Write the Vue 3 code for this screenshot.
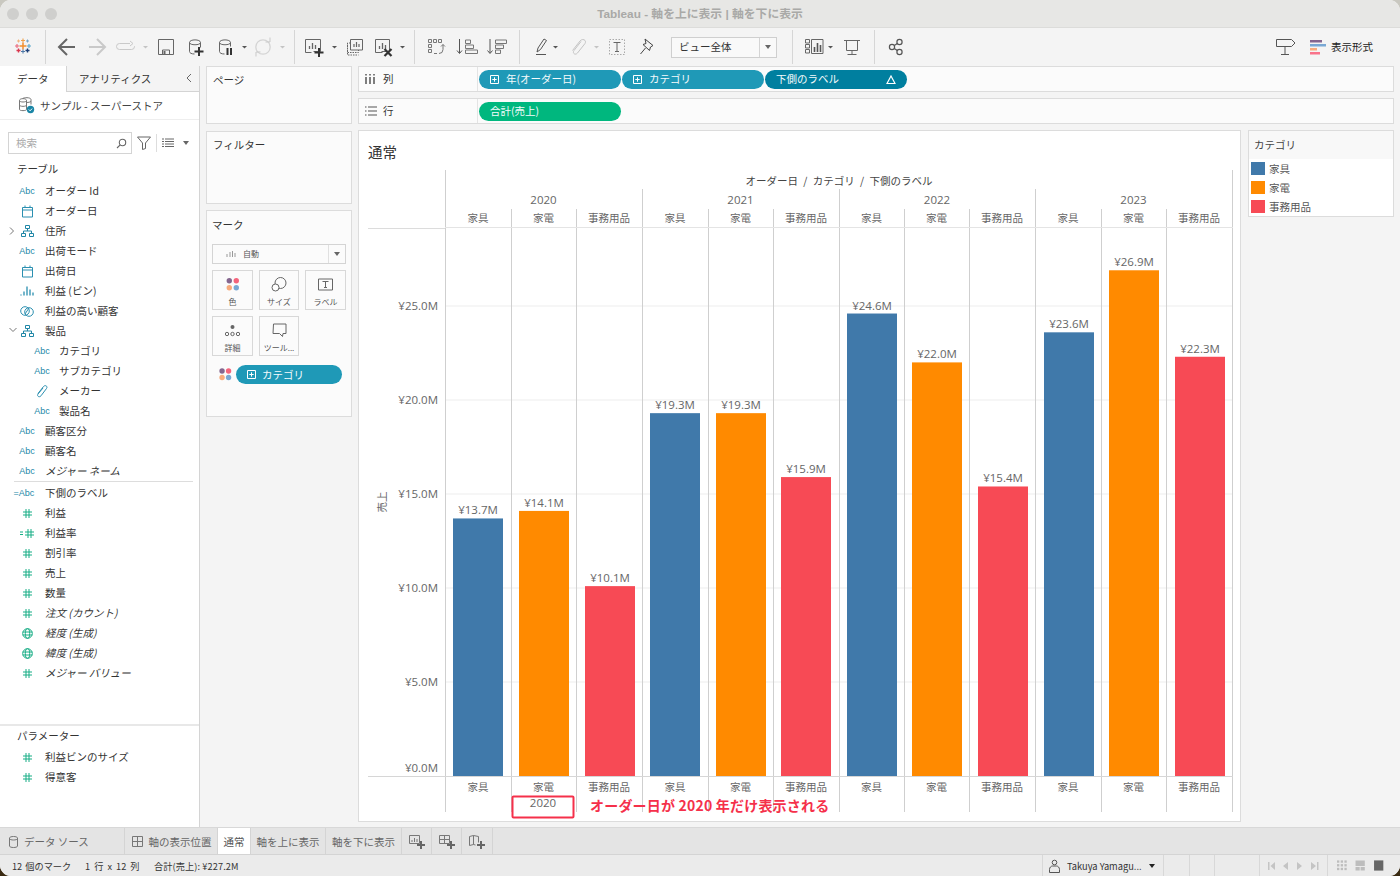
<script setup>
const fields1 = [
  { t: 'abc', n: 'オーダー Id' }, { t: 'cal', n: 'オーダー日' }, { t: 'hier', n: '住所', c: 'r' },
  { t: 'abc', n: '出荷モード' }, { t: 'cal', n: '出荷日' }, { t: 'bin', n: '利益 (ビン)' },
  { t: 'set', n: '利益の高い顧客' }, { t: 'hier', n: '製品', c: 'd' },
  { t: 'abc', n: 'カテゴリ', sub: 1 }, { t: 'abc', n: 'サブカテゴリ', sub: 1 },
  { t: 'clip', n: 'メーカー', sub: 1 }, { t: 'abc', n: '製品名', sub: 1 },
  { t: 'abc', n: '顧客区分' }, { t: 'abc', n: '顧客名' }, { t: 'abc', n: 'メジャー ネーム', i: 1 },
]
const fields2 = [
  { t: 'eqabc', n: '下側のラベル' }, { t: 'num', n: '利益' }, { t: 'eqnum', n: '利益率' },
  { t: 'num', n: '割引率' }, { t: 'num', n: '売上' }, { t: 'num', n: '数量' },
  { t: 'num', n: '注文 (カウント)', i: 1 }, { t: 'globe', n: '経度 (生成)', i: 1 },
  { t: 'globe', n: '緯度 (生成)', i: 1 }, { t: 'num', n: 'メジャー バリュー', i: 1 },
]
const params = [{ t: 'num', n: '利益ビンのサイズ' }, { t: 'num', n: '得意客' }]

const lines = [445, 511, 576, 642, 708, 773, 839, 904, 969, 1035, 1101, 1166, 1232]
const yearLines = [445, 642, 839, 1035, 1232]
const cats = ['家具', '家電', '事務用品']
const colors = ['#4079aa', '#ff8a00', '#f74a55']
const xs = [453, 519, 585, 650, 716, 781, 847, 912, 978, 1044, 1109, 1175]
const vals = [13.7, 14.1, 10.1, 19.3, 19.3, 15.9, 24.6, 22.0, 15.4, 23.6, 26.9, 22.3]
const bars = vals.map((v, i) => {
  const h = v * 18.8
  return {
    x: xs[i], y: 776 - h, h, c: colors[i % 3], cat: cats[i % 3],
    cx: (lines[i] + lines[i + 1]) / 2, label: '¥' + v.toFixed(1) + 'M',
  }
})
const years = [2020, 2021, 2022, 2023].map((y, i) => ({ y, x: (yearLines[i] + yearLines[i + 1]) / 2 }))
const ticks = [25, 20, 15, 10, 5, 0].map(v => ({ y: 776 - v * 18.8, label: '¥' + v.toFixed(1) + 'M' }))
const legend = [{ n: '家具', c: colors[0] }, { n: '家電', c: colors[1] }, { n: '事務用品', c: colors[2] }]
</script>

<template>
  <div class="win">
    <header class="titlebar">
      <span class="light"></span><span class="light"></span><span class="light"></span>
      <div class="wintitle">Tableau - 軸を上に表示 | 軸を下に表示</div>
    </header>

    <div class="toolbar">
      <svg width="45" height="38" viewBox="0 28 45 38" fill="none" stroke-width="1.100">
        <path d="M23 42.500v7M19.500 46h7" stroke="#f28e2b" stroke-width="1.500"/>
        <path d="M23 38.500v4M21 40.500h4" stroke="#eea04a"/>
        <path d="M23 49.500v4M21 51.500h4" stroke="#4e79a7"/>
        <path d="M17 44v4M15 46h4" stroke="#e9657b"/>
        <path d="M29 44v4M27 46h4" stroke="#59a5c9"/>
        <path d="M18.500 39.500v3M17 41h3" stroke="#f0b37e"/>
        <path d="M27.500 39.500v3M26 41h3" stroke="#76a5c8"/>
        <path d="M18.500 48.500v4M16.500 50.500h4" stroke="#d9374e" stroke-width="1.400"/>
        <path d="M27.500 48.500v4M25.500 50.500h4" stroke="#1c3f78" stroke-width="1.400"/>
      </svg>
      <i class="sep"></i>
      <svg width="248" height="38" viewBox="46 28 248 38" fill="none" stroke="#666" stroke-width="1">
        <path d="M75 47H59M67 39l-8 8 8 8" stroke-width="2"/>
        <path d="M89 47h16M97 39l8 8-8 8" stroke="#c9c9c9" stroke-width="2"/>
        <path d="M130 43.500h-10.500a3 3 0 0 0 0 6h12a3 3 0 0 0 3-3v-.500M130 41l3 2.500-3 2.500" stroke="#c9c9c9"/>
        <path d="M143 46h5l-2.500 2.500z" fill="#c4c4c4" stroke="none"/>
        <path d="M158.500 39.500h15v15h-15zM162.500 54.500v-4.500h7v4.500"/>
        <path d="M163.500 51h2v3h-2z" fill="#666" stroke="none"/>
        <path d="M189.500 42.500c0-3.500 11-3.500 11 0v5M189.500 42.500v9c0 1.500 2 2.500 5 2.500M189.500 42.500c0 3 11 3 11 0"/>
        <path d="M199 47v9M194.500 51.500h9" stroke="#333" stroke-width="2"/>
        <path d="M219.500 42.500c0-3.500 11-3.500 11 0v4M219.500 42.500v9c0 1.500 2 2.500 5 2.500M219.500 42.500c0 3 11 3 11 0"/>
        <path d="M227.500 48v7M231 48v7" stroke="#333" stroke-width="2"/>
        <path d="M242 46h5l-2.500 2.500z" fill="#555" stroke="none"/>
        <circle cx="263" cy="47" r="7.200" stroke="#d4d4d4" stroke-width="1.300"/>
        <path d="M270 37.500v4.500h-4.500M256 56.500V52h4.500" stroke="#c9c9c9"/>
        <path d="M280 46h5l-2.500 2.500z" fill="#c4c4c4" stroke="none"/>
      </svg>
      <i class="sep"></i>
      <svg width="119" height="38" viewBox="295 28 119 38" fill="none" stroke="#666" stroke-width="1">
        <path d="M305.500 39.500h15v12h-7M305.500 39.500v13h6"/>
        <path d="M309.500 49v-3M312.500 49v-6M315.500 49v-4" stroke-width="1.300"/>
        <path d="M319 48v9M314.500 52.500h9" stroke="#333" stroke-width="2"/>
        <path d="M332 46h5l-2.500 2.500z" fill="#555" stroke="none"/>
        <path d="M350.500 39.500h12v10.500h-12z"/>
        <path d="M354 47v-3M356.500 47v-5M359 47v-3" stroke-width="1.200"/>
        <path d="M350.500 43h-3v9.500h11v-2.500M347.500 43v12h11" stroke-dasharray="1.500 1"/>
        <path d="M375.500 39.500h14v12h-8M375.500 39.500v13h7"/>
        <path d="M379.500 49v-3M382.500 49v-6M385.500 49v-4" stroke-width="1.300"/>
        <path d="M384.500 49l7 7M391.500 49l-7 7" stroke="#333" stroke-width="2.200"/>
        <path d="M400 46h5l-2.500 2.500z" fill="#555" stroke="none"/>
      </svg>
      <i class="sep"></i>
      <svg width="104" height="38" viewBox="415 28 104 38" fill="none" stroke="#777" stroke-width="1">
        <path d="M428.500 39.500h3v3h-3zM433.500 39.500h3v3h-3zM438.500 39.500h3v3h-3zM428.500 44.500h3v3h-3zM428.500 49.500h3v3h-3zM434 53.500h3"/>
        <path d="M443 44.500v5a4 4 0 0 1-4 4M441 46.500l2-2 2 2"/>
        <path d="M459.500 39v14M457 50.500l2.500 3 2.500-3" stroke="#555" stroke-width="1"/>
        <path d="M465.500 40h5v3.500h-5zM465.500 45h8v3.500h-8zM465.500 50h12v3.500h-12z"/>
        <path d="M490 39v14M487.500 50.500l2.500 3 2.500-3" stroke="#555" stroke-width="1"/>
        <path d="M495.500 40h11v3.500h-11zM495.500 45h8v3.500h-8zM495.500 50h5v3.500h-5z"/>
      </svg>
      <i class="sep"></i>
      <svg width="151" height="38" viewBox="520 28 151 38" fill="none" stroke="#666" stroke-width="1">
        <path d="M537 52l1-4 6-9 2.500 1.500-6 9z M536 54.500h10" stroke="#555"/>
        <path d="M553 46h5l-2.500 2.500z" fill="#555" stroke="none"/>
        <path d="M572.500 50.500L580 41c2.500-3 7-1 5 2.500L577.500 53c-2 2.500-5.500.5-3.500-2.500l7-9" stroke="#c4c4c4" stroke-width="1"/>
        <path d="M594 46h5l-2.500 2.500z" fill="#c4c4c4" stroke="none"/>
        <path d="M609.500 39.500h15v15h-15z" stroke="#aaa" stroke-dasharray="1.500 1.500"/>
        <path d="M613.500 42.500h7M617 42.500v9M615 51.500h4" stroke="#666"/>
        <path d="M645 39l8 6.500-2.500 1.500-1 3.500-6.500-6 3-1zM645.500 48l-5 6" stroke="#444"/>
      </svg>
      <div class="viewsel"><span class="vt">ビュー全体</span><span class="vc"><b class="caret"></b></span></div>
      <i class="gap15"></i>
      <i class="sep"></i>
      <svg width="81" height="38" viewBox="793 28 81 38" fill="none" stroke="#666" stroke-width="1">
        <path d="M805.500 39.500h4v3.500h-4zM805.500 44.500h4v3.500h-4zM805.500 49.500h4v3.500h-4zM811.500 39.500h11.500v14h-11.500z"/>
        <path d="M814.500 52v-5M817.500 52v-9M820.500 52v-7" stroke="#555" stroke-width="1.600"/>
        <path d="M828 46h5l-2.500 2.500z" fill="#555" stroke="none"/>
        <path d="M844 40.500h16M846.500 41v9.500h11V41M852 50.500v4M847.500 54.500h9" stroke-width="1"/>
      </svg>
      <i class="sep"></i>
      <svg width="44" height="38" viewBox="875 28 44 38" fill="none" stroke="#555" stroke-width="1.200">
        <circle cx="892" cy="47" r="2.600"/><circle cx="899.500" cy="42" r="2.600"/><circle cx="899.500" cy="52" r="2.600"/>
        <path d="M894.300 45.500l3-2M894.300 48.500l3 2"/>
      </svg>
      <div class="tbright">
        <svg width="24" height="24" viewBox="1274 35 24 24" fill="none" stroke="#555" stroke-width="1">
          <path d="M1276.500 39.500h15l3.500 3.500-3.500 3.500h-15zM1285 46.500v8M1281 54.500h8"/>
        </svg>
        <svg class="fmt" width="16" height="15" viewBox="0 0 16 15">
          <rect x="0" y="0" width="12" height="2.500" fill="#85668f"/><rect x="0" y="4" width="16" height="2.500" fill="#79a8d4"/>
          <rect x="0" y="8" width="7" height="2.500" fill="#f8ab7c"/><rect x="0" y="12" width="10" height="2.500" fill="#f9738a"/>
        </svg>
        <span class="fmttext">表示形式</span>
      </div>
    </div>

    <div class="main">
      <aside class="datapane">
        <div class="dtabs">
          <div class="dtab on">データ</div>
          <div class="dtab">アナリティクス<svg class="chev" width="8" height="10" viewBox="0 0 8 10" fill="none" stroke="#666"><path d="M6 1L2 5l4 4"/></svg></div>
        </div>
        <div class="dsrc">
          <svg width="17" height="17" viewBox="0 0 17 17" fill="none" stroke="#777">
            <path d="M1.500 3.500c0-2.500 7-2.500 7 0v9c0 1.500-7 1.500-7 0zM1.500 3.500c0 2 7 2 7 0M1.500 8c0 1.800 7 1.800 7 0"/>
            <path d="M5 1.500c.5-1 7.500-1.500 8 1v5M8.500 5.500c2 0 3.500-.3 4.500-1"/>
            <circle cx="12.500" cy="12.500" r="3.700" fill="#1b86a6" stroke="none"/>
            <path d="M10.800 12.500l1.300 1.300 2-2.200" stroke="#fff"/>
          </svg>
          <span>サンプル - スーパーストア</span>
        </div>
        <div class="searchrow">
          <div class="search"><span>検索</span>
            <svg width="11" height="11" viewBox="0 0 11 11" fill="none" stroke="#666" stroke-width="1.100"><circle cx="6.500" cy="4.500" r="3.200"/><path d="M4.200 6.800L1 10"/></svg>
          </div>
          <svg class="ficon" width="14" height="14" viewBox="0 0 14 14" fill="none" stroke="#666"><path d="M.5 1h13L8.500 7v5.500l-3 1V7z"/></svg>
          <i class="vsep"></i>
          <svg width="12" height="10" viewBox="0 0 12 10" stroke="#666" fill="none"><path d="M0 1h2M3 1h9M0 3.500h2M3 3.500h9M0 6h2M3 6h9M0 8.500h2M3 8.500h9" /></svg>
          <b class="caret gap"></b>
        </div>
        <div class="dhead first">テーブル</div>
        <template v-for="(list, li) in [fields1, fields2]" :key="li">
          <div v-if="li === 1" class="fdiv"></div>
          <div v-for="f in list" :key="f.n" class="frow" :class="{ sub: f.sub, ital: f.i }">
            <svg v-if="f.c === 'r'" class="ch" width="6" height="8" viewBox="0 0 6 8" fill="none" stroke="#777"><path d="M1 .5L4.500 4 1 7.500"/></svg>
            <svg v-if="f.c === 'd'" class="ch" width="8" height="6" viewBox="0 0 8 6" fill="none" stroke="#777"><path d="M.5 1L4 4.500 7.500 1"/></svg>
            <span class="ficn">
              <span v-if="f.t === 'abc'" class="abc">Abc</span>
              <span v-else-if="f.t === 'eqabc'" class="abc eq">=Abc</span>
              <svg v-else-if="f.t === 'cal'" width="13" height="13" viewBox="0 0 13 13" fill="none" stroke="#2a8fb0"><path d="M1.500 2.500h10v9.500h-10zM1.500 5h10M4 .5v2.500M9 .5v2.500"/></svg>
              <svg v-else-if="f.t === 'hier'" width="13" height="12" viewBox="0 0 13 12" fill="none" stroke="#1f86a6"><path d="M4.500 .5h4v3h-4zM.5 8.500h4v3h-4zM8.500 8.500h4v3h-4zM6.500 3.500V6M2.500 8.500V6h8v2.500"/></svg>
              <svg v-else-if="f.t === 'bin'" width="14" height="10" viewBox="0 0 14 10" fill="none" stroke="#2a8fb0" stroke-width="1.300"><path d="M1 9.500v-1M4 9.500v-4M7 9.500V.5M10 9.500v-6M13 9.500v-3"/></svg>
              <svg v-else-if="f.t === 'set'" width="14" height="13" viewBox="0 0 14 13" fill="none" stroke="#2a8fb0"><circle cx="5" cy="6" r="4.300"/><circle cx="9" cy="7" r="4.300"/><path d="M5 9l4-6"/></svg>
              <svg v-else-if="f.t === 'clip'" width="11" height="13" viewBox="0 0 11 13" fill="none" stroke="#2a8fb0"><path d="M1 8.500L6.500 1.500c2-2 4.500 0 3 2L4 10.800c-1.500 2-4.500.5-3-1.800L6 3"/></svg>
              <svg v-else-if="f.t === 'num' || f.t === 'eqnum'" class="hash" :width="f.t === 'eqnum' ? 14 : 9" height="9" :viewBox="f.t === 'eqnum' ? '-5 0 14 9' : '0 0 9 9'" fill="none" stroke="#17ad85"><path d="M3 0v9M6 0v9M0 3h9M0 6h9"/><path v-if="f.t === 'eqnum'" d="M-5 3h3M-5 5.500h3"/></svg>
              <svg v-else-if="f.t === 'globe'" width="11" height="11" viewBox="0 0 11 11" fill="none" stroke="#17ad85"><circle cx="5.500" cy="5.500" r="4.800"/><ellipse cx="5.500" cy="5.500" rx="2.200" ry="4.800"/><path d="M.7 4h9.600M.7 7h9.600"/></svg>
            </span>
            <span class="fname">{{ f.n }}</span>
          </div>
        </template>
        <div class="pdiv"></div>
        <div class="dhead phead">パラメーター</div>
        <div v-for="f in params" :key="f.n" class="frow">
          <span class="ficn"><svg width="9" height="9" viewBox="0 0 9 9" fill="none" stroke="#17ad85"><path d="M3 0v9M6 0v9M0 3h9M0 6h9"/></svg></span>
          <span class="fname">{{ f.n }}</span>
        </div>
      </aside>

      <div class="cards">
        <section class="card pages">ページ</section>
        <section class="card filters">フィルター</section>
        <section class="card marks">
          <div class="mt">マーク</div>
          <div class="marksel">
            <svg width="10" height="8" viewBox="0 0 10 8" stroke="#999" fill="none"><path d="M1 7V4M4 7V2M6.500 7V1M9 7V3"/></svg>
            <span>自動</span><i class="mc"><b class="caret"></b></i>
          </div>
          <div class="mgrid">
            <div class="mbtn"><svg width="14" height="14" viewBox="0 0 14 14"><circle cx="3.300" cy="3.300" r="2.700" fill="#85668f"/><circle cx="10.300" cy="3.300" r="2.700" fill="#f4647c"/><circle cx="3.300" cy="10.300" r="2.700" fill="#f8ab7c"/><circle cx="10.300" cy="10.300" r="2.700" fill="#79a8d4"/></svg><span>色</span></div>
            <div class="mbtn"><svg width="16" height="16" viewBox="0 0 16 16" fill="none" stroke="#666"><circle cx="9.500" cy="6.500" r="5.500"/><circle cx="4.500" cy="11" r="3.500" fill="#fff"/></svg><span>サイズ</span></div>
            <div class="mbtn"><svg width="15" height="12" viewBox="0 0 15 12" fill="none" stroke="#666"><path d="M.5.5h14v11H.5zM4.500 3h6M7.500 3v6M6 9h3"/></svg><span>ラベル</span></div>
            <div class="mbtn"><svg width="15" height="13" viewBox="0 0 15 13" fill="none" stroke="#666"><circle cx="7.500" cy="3" r="2" fill="#666" stroke="none"/><circle cx="2" cy="10" r="1.700"/><circle cx="7.500" cy="10" r="1.700"/><circle cx="13" cy="10" r="1.700"/></svg><span>詳細</span></div>
            <div class="mbtn"><svg width="15" height="14" viewBox="0 0 15 14" fill="none" stroke="#666"><path d="M1.500 .5h12.500v9.500h-3l-.5 3-3-3h-6.500z"/></svg><span>ツール...</span></div>
          </div>
          <div class="mpillrow">
            <svg width="13" height="13" viewBox="0 0 14 14"><circle cx="3.300" cy="3.300" r="2.900" fill="#85668f"/><circle cx="10.300" cy="3.300" r="2.900" fill="#f4647c"/><circle cx="3.300" cy="10.300" r="2.900" fill="#f8ab7c"/><circle cx="10.300" cy="10.300" r="2.900" fill="#79a8d4"/></svg>
            <div class="pill blue mp"><svg class="plus mpl" width="9" height="9" viewBox="0 0 9 9" fill="none" stroke="#fff"><path d="M.5.5h8v8h-8zM4.500 2.300v4.400M2.300 4.500h4.400"/></svg>カテゴリ</div>
          </div>
        </section>
      </div>

      <div class="rightcol">
        <div class="shelf">
          <div class="shead"><svg width="12" height="10" viewBox="0 0 12 10" fill="none" stroke="#555" stroke-width="1.500"><path d="M1 3v7M5 3v7M9 3v7M1 0v1.500M5 0v1.500M9 0v1.500"/></svg><span>列</span></div>
          <div class="pills">
            <div class="pill blue"><svg class="plus" width="9" height="9" viewBox="0 0 9 9" fill="none" stroke="#fff"><path d="M.5.5h8v8h-8zM4.500 2.300v4.400M2.300 4.500h4.400"/></svg>年(オーダー日)</div>
            <div class="pill blue"><svg class="plus" width="9" height="9" viewBox="0 0 9 9" fill="none" stroke="#fff"><path d="M.5.5h8v8h-8zM4.500 2.300v4.400M2.300 4.500h4.400"/></svg>カテゴリ</div>
            <div class="pill deep">下側のラベル<svg class="delta" width="10" height="9" viewBox="0 0 10 9" fill="none" stroke="#fff" stroke-width="1.200"><path d="M5 1l4 7.500H1z"/></svg></div>
          </div>
        </div>
        <div class="shelf">
          <div class="shead"><svg width="12" height="10" viewBox="0 0 12 10" fill="none" stroke="#555" stroke-width="1.200"><path d="M0 1h1.500M3 1h9M0 5h1.500M3 5h9M0 9h1.500M3 9h9"/></svg><span>行</span></div>
          <div class="pills"><div class="pill green">合計(売上)</div></div>
        </div>
        <div class="viewrow">
          <section class="view">
            <h1>通常</h1>
            <svg class="chart" width="881" height="651" viewBox="359 170 881 651">
              <g stroke="#ededed">
                <line v-for="t in ticks.slice(0, 5)" :key="t.y" x1="445" :x2="1233" :y1="t.y" :y2="t.y"/>
              </g>
              <g stroke="#cfcfcf">
                <line v-for="(x, i) in lines" :key="'v' + i" :x1="x + .5" :x2="x + .5" y1="228" y2="776"/>
                <line v-for="(x, i) in lines" :key="'b' + i" :x1="x + .5" :x2="x + .5" y1="776" y2="812"/>
                <line v-for="(x, i) in lines" :key="'c' + i" :x1="x + .5" :x2="x + .5" y1="209" y2="228"/>
                <line v-for="x in yearLines" :key="'y' + x" :x1="x + .5" :x2="x + .5" y1="189" y2="209"/>
                <line x1="445.500" x2="445.500" y1="170" y2="189"/>
                <line x1="1232.500" x2="1232.500" y1="170" y2="189"/>
              </g>
              <line x1="368" x2="445" y1="228.500" y2="228.500" stroke="#dcdcdc" stroke-width="1"/>
              <line x1="445" x2="1233" y1="227.500" y2="227.500" stroke="#e4e4e4"/>
              <text class="t hd" x="839" y="185" text-anchor="middle">オーダー日 / カテゴリ / 下側のラベル</text>
              <text v-for="y in years" :key="y.y" class="t yr" :x="y.x" y="204" text-anchor="middle">{{ y.y }}</text>
              <text v-for="(b, i) in bars" :key="'h' + i" class="t cat" :x="b.cx" y="222" text-anchor="middle">{{ b.cat }}</text>
              <text v-for="t in ticks" :key="t.label" class="t yr" x="438" :y="t.y - (t.label === '¥0.0M' ? 4 : -4)" text-anchor="end">{{ t.label }}</text>
              <text class="t cat" transform="translate(386 502) rotate(-90)" text-anchor="middle">売上</text>
              <template v-for="(b, i) in bars" :key="'r' + i">
                <rect :x="b.x" :y="b.y" width="50" :height="b.h" :fill="b.c"/>
                <text class="t yr" :x="b.x + 25" :y="b.y - 4" text-anchor="middle">{{ b.label }}</text>
                <text class="t cat" :x="b.cx" y="791" text-anchor="middle">{{ b.cat }}</text>
              </template>
              <line x1="368" x2="1233" y1="776.500" y2="776.500" stroke="#d6d6d6"/>
              <text class="t yr" x="543" y="807" text-anchor="middle">2020</text>
              <rect x="512.500" y="796.500" width="61" height="21" rx="1" fill="none" stroke="#f5304a" stroke-width="2"/>
              <text class="note" x="590" y="811">オーダー日が 2020 年だけ表示される</text>
            </svg>
          </section>
          <section class="legend">
            <div class="lt">カテゴリ</div>
            <div v-for="l in legend" :key="l.n" class="lrow">
              <i class="sw" :style="{ background: l.c }"></i><span>{{ l.n }}</span>
            </div>
          </section>
        </div>
      </div>
    </div>

    <nav class="tabs">
      <div class="tab ds">
        <svg width="9" height="12" viewBox="0 0 9 12" fill="none" stroke="#777"><path d="M.5 2c0-2 8-2 8 0v8c0 2-8 2-8 0zM.5 2.500c0 2 8 2 8 0"/></svg>
        <span>データ ソース</span>
      </div>
      <div class="tab t1">
        <svg width="11" height="11" viewBox="0 0 11 11" fill="none" stroke="#777"><path d="M.5.5h10v10H.5zM5.500.5v10M.5 5.500h10"/></svg>
        <span>軸の表示位置</span>
      </div>
      <div class="tab cur t2">通常</div>
      <div class="tab t3">軸を上に表示</div>
      <div class="tab t4">軸を下に表示</div>
      <div class="tab ic">
        <svg width="18" height="16" viewBox="0 0 18 16" fill="none" stroke="#777"><path d="M1.500 1.500h10v8h-10zM4 8V6M6.500 8V4M9 8V5"/><path d="M13 7v8M9 11h8" stroke="#666" stroke-width="2"/></svg>
      </div>
      <div class="tab ic">
        <svg width="18" height="16" viewBox="0 0 18 16" fill="none" stroke="#777"><path d="M1.500 1.500h10v8h-10zM6.500 1.500v8M1.500 5.500h10"/><path d="M13 7v8M9 11h8" stroke="#666" stroke-width="2"/></svg>
      </div>
      <div class="tab ic last">
        <svg width="18" height="16" viewBox="0 0 18 16" fill="none" stroke="#777"><path d="M1.500 2.500l4-1v9l-4 1zM5.500 1.500l5 1v6M5.500 10.500l2 .5"/><path d="M13 7v8M9 11h8" stroke="#666" stroke-width="2"/></svg>
      </div>
    </nav>

    <footer class="status">
      <span class="s1">12 個のマーク</span>
      <span class="s2">1 行 x 12 列</span>
      <span class="s3">合計(売上): ¥227.2M</span>
      <div class="stright">
        <div class="sc user">
          <svg width="11" height="14" viewBox="0 0 11 14" fill="none" stroke="#555"><circle cx="5.500" cy="3.500" r="2.300"/><path d="M.5 13.500v-3c0-2 1.500-3.500 3-3.500h4c1.500 0 3 1.500 3 3.500v3z"/></svg>
          <span>Takuya Yamagu...</span><b class="caret blk"></b>
        </div>
        <div class="sc c26"></div><div class="sc c25"></div><div class="sc c45"></div>
        <div class="sc nav">
          <svg width="56" height="10" viewBox="0 0 56 10" fill="#c4c4c4"><path d="M0 1h1.500v8H0zM7 1v8L2.500 5zM20 1v8l-5-4zM29 1v8l5-4zM43 1v8l5-4zM49 1h1.500v8H49z"/></svg>
        </div>
        <div class="views">
          <svg width="68" height="11" viewBox="0 0 68 11">
            <g fill="#bdbdbd"><rect width="2.500" height="2.500"/><rect x="4" width="2.500" height="2.500"/><rect x="8" width="2.500" height="2.500"/><rect y="4" width="2.500" height="2.500"/><rect x="4" y="4" width="2.500" height="2.500"/><rect x="8" y="4" width="2.500" height="2.500"/><rect y="8" width="2.500" height="2.500"/><rect x="4" y="8" width="2.500" height="2.500"/><rect x="8" y="8" width="2.500" height="2.500"/></g>
            <path d="M20 0h10v6H20zM20 7h4.500v4H20zM25.500 7H30v4h-4.500z" fill="#bdbdbd"/>
            <rect x="40" width="10" height="11" fill="#666"/>
          </svg>
        </div>
      </div>
    </footer>
  </div>
</template>

<style>
html, body { margin: 0; background: linear-gradient(#c9c8c0 0, #c9c8c0 50%, #3a2a12 50%, #3a2a12 100%); }
</style>

<style scoped>
* { box-sizing: border-box; }
.win {
  width: 1400px; height: 876px; display: flex; flex-direction: column; overflow: hidden;
  border-radius: 11px; background: #f4f4f4; color: #333;
  font: 10.5px/14px "Noto Sans CJK JP", "Noto Sans", sans-serif;
}
.titlebar {
  height: 28px; flex: none; background: #e7e7e5; border-bottom: 1px solid #dcdcda; position: relative;
  display: flex; align-items: center; gap: 7px; padding-left: 7px;
}
.light { width: 12px; height: 12px; border-radius: 50%; background: #cfcfcd; }
.wintitle {
  position: absolute; left: 0; right: 0; top: 7px; text-align: center; color: #a9a9a7; font-weight: 700;
  font-size: 11.800px; font-family: "Liberation Sans", "Noto Sans CJK JP", sans-serif;
}
.toolbar { height: 38px; flex: none; display: flex; align-items: center; background: #f4f4f4; }
.toolbar > svg { display: block; flex: none; }
.sep { width: 1px; height: 34px; background: #d6d6d6; flex: none; }
.gap15 { width: 15px; flex: none; }
.viewsel {
  width: 106px; height: 21px; border: 1px solid #cfcfcf; background: #f9f9f9; display: flex; align-items: center; flex: none;
}
.vt { flex: 1; padding-left: 7px; }
.vc { width: 17px; height: 100%; border-left: 1px solid #d4d4d4; display: flex; align-items: center; justify-content: center; }
.caret { width: 0; height: 0; border: 3.500px solid transparent; border-top: 4px solid #666; border-bottom: 0; display: block; flex: none; }
.caret.gap { margin-left: 9px; }
.caret.blk { border-top-color: #222; }
.tbright { margin-left: auto; display: flex; align-items: center; padding-right: 27px; }
.fmt { margin-left: 12px; }
.fmttext { margin-left: 5px; color: #222; }

.main { flex: 1; min-height: 0; display: flex; background: #f4f4f4; }
.datapane { width: 200px; flex: none; background: #fff; border-right: 1px solid #d4d4d4; }
.dtabs { height: 26px; display: flex; }
.dtab { display: flex; align-items: center; position: relative; background: #f4f4f4; border-bottom: 1px solid #d4d4d4; flex: 1; padding-left: 12px; }
.dtab.on { width: 67px; flex: none; background: #fff; border: 0; border-right: 1px solid #d4d4d4; padding-left: 17px; }
.chev { position: absolute; right: 6px; top: 7px; }
.dsrc { height: 28px; display: flex; align-items: center; gap: 5px; padding-left: 18px; border-bottom: 1px solid #eee; }
.dsrc span { color: #444; }
.searchrow { margin-top: 12px; padding-left: 8px; height: 22px; display: flex; align-items: center; }
.search { width: 124px; height: 22px; border: 1px solid #d4d4d4; display: flex; align-items: center; justify-content: space-between; padding: 0 4px 0 7px; color: #aaa; }
.ficon { margin-left: 5px; }
.vsep { width: 1px; height: 18px; background: #ddd; margin: 0 5px 0 5px; }
.dhead { height: 18px; padding-left: 17px; line-height: 18px; color: #333; }
.dhead.first { margin-top: 6px; margin-bottom: 3px; }
.frow { height: 20px; display: flex; align-items: center; padding-left: 18px; position: relative; }
.frow.sub { padding-left: 33px; }
.frow.sub .fname { margin-left: 8px; }
.frow.ital .fname { font-style: italic; }
.ficn { width: 18px; height: 20px; display: flex; align-items: center; justify-content: center; flex: none; }
.fname { margin-left: 9px; color: #333; white-space: nowrap; }
.abc { font: 9px/20px "Liberation Sans", sans-serif; color: #2488a8; }
.eq { margin-left: -6px; }
.ch { position: absolute; left: 9px; top: 6px; }
.fdiv { height: 1px; background: #ddd; margin: 0 6px 1px 14px; }
.pdiv { height: 2px; background: #e8e8e8; margin-top: 41px; }
.phead { margin-top: 1px; }
.phead + .frow { margin-top: 2px; }

.cards { width: 146px; margin-left: 6px; flex: none; display: flex; flex-direction: column; }
.card { background: #fbfbfb; border: 1px solid #dcdcdc; padding: 6px 6px; color: #333; }
.pages { height: 58px; }
.filters { height: 73px; margin-top: 7px; }
.marks { height: 207px; margin-top: 6px; padding: 6px 5px; }
.mt { height: 26px; padding-top: 1px; }
.marksel { height: 20px; border: 1px solid #d4d4d4; margin-top: 1px; display: flex; align-items: center; padding-left: 13px; font-size: 8px; color: #555; }
.marksel span { margin-left: 7px; flex: 1; }
.mc { width: 17px; height: 100%; border-left: 1px solid #e0e0e0; display: flex; align-items: center; justify-content: center; }
.mgrid { display: grid; grid-template-columns: 41px 40px 41px; gap: 6px; margin-top: 6px; }
.mbtn { height: 40px; border: 1px solid #d8d8d8; display: flex; flex-direction: column; align-items: center; justify-content: space-between; padding: 5px 0 1px; font-size: 8px; color: #555; line-height: 12px; }
.mbtn svg { height: 17px; }
.mpillrow { display: flex; align-items: center; margin-top: 9px; padding-left: 7px; gap: 4px; }
.pill {
  width: 142px; height: 19px; border-radius: 10px; color: #f5fbfc; display: flex; align-items: center; padding-left: 11px; position: relative; flex: none;
}
.blue { background: #1f99b7; }
.deep { background: #007f9f; }
.green { background: #00b77e; }
.mp { width: 106px; margin-left: 0; }
.plus { margin-right: 7px; }
.mpl { margin-right: 6px; }
.delta { position: absolute; right: 11px; top: 5px; }

.rightcol { width: 1036px; margin-left: 6px; flex: none; display: flex; flex-direction: column; }
.shelf { height: 26px; border: 1px solid #dcdcdc; background: #fbfbfb; display: flex; align-items: center; margin-bottom: 6px; }
.shead { width: 119px; height: 100%; border-right: 1px solid #e4e4e4; display: flex; align-items: center; gap: 6px; padding-left: 6px; color: #333; flex: none; }
.pills { display: flex; gap: 1px; padding-left: 1px; }
.viewrow { display: flex; gap: 7px; align-items: flex-start; }
.view { width: 883px; height: 692px; background: #fff; border: 1px solid #dcdcdc; flex: none; }
.view h1 { margin: 0; height: 39px; padding: 11px 0 0 9px; font-size: 14.500px; line-height: 20px; font-weight: 400; color: #333; }
.chart { display: block; }
.t { font-family: "Noto Sans CJK JP", sans-serif; fill: #666; }
.hd { font-size: 10.500px; fill: #444; word-spacing: 3px; }
.cat { font-size: 10.500px; }
.yr { font-size: 11.500px; font-family: "Open Sans", sans-serif; }
.note { font-family: "Noto Sans CJK JP", sans-serif; font-weight: 700; font-size: 14px; fill: #f5304a; letter-spacing: .2px; }
.legend { width: 146px; height: 87px; border: 1px solid #dcdcdc; background: #fff; flex: none; }
.lt { height: 28px; background: #f8f8f8; padding: 7px 5px 0; color: #444; }
.lrow { height: 19px; display: flex; align-items: center; padding-left: 2px; gap: 4px; color: #555; }
.sw { width: 14px; height: 13px; flex: none; }

.tabs { height: 28px; flex: none; display: flex; background: #e4e4e4; border-top: 1px solid #d8d8d8; border-bottom: 1px solid #d4d4d4; color: #666; }
.tab { display: flex; align-items: center; justify-content: center; border-right: 1px solid #d4d4d4; gap: 6px; flex: none; padding-top: 1px; }
.ds { width: 125px; justify-content: flex-start; padding-left: 9px; }
.t1 { width: 93px; padding-left: 1px; }
.t2 { width: 33px; }
.cur { background: #fff; color: #555; }
.t3 { width: 75px; }
.t4 { width: 76px; }
.ic { width: 30px; }
.ic.last { width: 31px; }
.status { height: 21px; flex: none; background: #ebebeb; display: flex; align-items: center; font-size: 9.200px; color: #333; position: relative; word-spacing: 1px; }
.s1 { width: 73px; margin-left: 12px; }
.s2 { width: 69px; word-spacing: 2px; }
.s3 { word-spacing: 0; letter-spacing: .1px; }
.stright { margin-left: auto; display: flex; height: 100%; word-spacing: 0; }
.sc { height: 100%; border-left: 1px solid #d8d8d8; display: flex; align-items: center; }
.user { width: 121px; padding-left: 6px; gap: 7px; font-size: 9.300px; }
.user span { white-space: nowrap; }
.c26 { width: 26px; }
.c25 { width: 25px; }
.c45 { width: 45px; }
.nav { width: 68px; padding-left: 8px; }
.views { width: 73px; border-left: 1px solid #d8d8d8; display: flex; align-items: center; padding-left: 9px; }
</style>
